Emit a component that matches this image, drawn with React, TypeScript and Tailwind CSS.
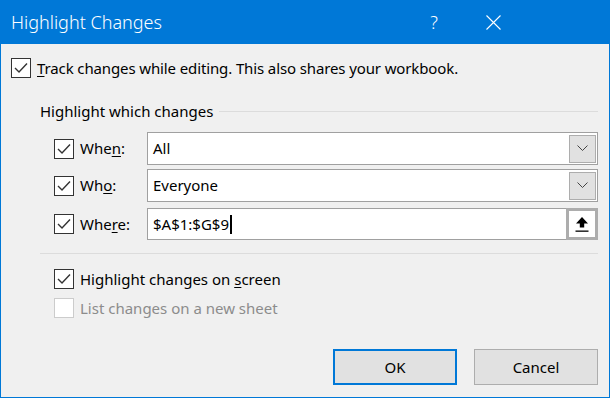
import React from "react";

const font = { fontFamily: '"Noto Sans", "Segoe UI", sans-serif' };

function Check({ checked = true, disabled = false }: { checked?: boolean; disabled?: boolean }) {
  return (
    <div
      className={`w-[20px] h-[20px] shrink-0 border flex items-center justify-center ${
        disabled ? "border-[#cccccc] bg-[#ffffff]" : "border-[#333333] bg-[#ffffff]"
      }`}
    >
      {checked && (
        <svg width="14" height="12" viewBox="0 0 14 12">
          <path d="M1 6 L5 10 L13 1.5" fill="none" stroke="#333" strokeWidth="1.4" />
        </svg>
      )}
    </div>
  );
}

function Chevron() {
  return (
    <svg width="11" height="7" viewBox="0 0 11 7">
      <path d="M0.5 0.5 L5.5 5.5 L10.5 0.5" fill="none" stroke="#444" strokeWidth="1" />
    </svg>
  );
}

function Combo({ text }: { text: string }) {
  return (
    <div className="flex-1 h-[33px] border border-[#a0a0a0] bg-white flex items-center">
      <span className="flex-1 pl-[5px] text-[15px] text-black">{text}</span>
      <div className="w-[27px] h-[28px] mr-[1px] bg-[#e1e1e1] border border-[#adadad] flex items-center justify-center">
        <Chevron />
      </div>
    </div>
  );
}

export default function App() {
  return (
    <div
      style={font}
      className="w-[610px] h-[398px] border border-[#0078d7] bg-[#f0f0f0] flex flex-col text-black"
    >
      <div className="h-[43px] bg-[#0078d7] flex items-center text-white shrink-0">
        <span className="ml-[10px] text-[18px] font-light flex-1">Highlight Changes</span>
        <span className="text-[18px] font-light w-[20px] text-center mr-[41px]">?</span>
        <div className="w-[16px] h-[16px] mr-[108px] flex items-center justify-center">
          <svg width="15" height="15" viewBox="0 0 15 15">
            <path d="M0.5 0.5 L14.5 14.5 M14.5 0.5 L0.5 14.5" stroke="white" strokeWidth="1.1" />
          </svg>
        </div>
      </div>

      <div className="flex-1 flex flex-col pl-[10px] pr-[11px]">
        <div className="flex items-center mt-[14px] h-[20px]">
          <Check />
          <span className="ml-[6px] text-[15px] whitespace-nowrap tracking-[-0.12px]">
            <span className="underline underline-offset-2">T</span>rack changes while editing. This also shares your workbook.
          </span>
        </div>

        <div className="flex items-center mt-[23px] ml-[29px] h-[20px]">
          <span className="text-[15px] whitespace-nowrap">Highlight which changes</span>
          <div className="flex-1 h-px bg-[#dcdcdc] ml-[6px]" />
        </div>

        <div className="flex flex-col ml-[43px] mt-[11px] gap-[4px]">
          <div className="flex items-center">
            <Check />
            <span className="ml-[6px] w-[67px] text-[15px]">
              Whe<span className="underline underline-offset-2">n</span>:
            </span>
            <Combo text="All" />
          </div>
          <div className="flex items-center">
            <Check />
            <span className="ml-[6px] w-[67px] text-[15px]">
              Wh<span className="underline underline-offset-2">o</span>:
            </span>
            <Combo text="Everyone" />
          </div>
          <div className="flex items-center mt-[2px]">
            <Check />
            <span className="ml-[6px] w-[67px] text-[15px]">
              Whe<span className="underline underline-offset-2">r</span>e:
            </span>
            <div className="flex-1 h-[32px] border border-[#a0a0a0] bg-white flex items-center">
              <span className="flex-1 pl-[5px] text-[15px] flex items-center">
                $A$1:$G$9
                <span className="inline-block w-[2px] h-[19px] bg-black ml-[1px]" />
              </span>
              <div className="w-[32px] h-[32px] -mr-px border-[3px] border-[#adadad] bg-white flex items-center justify-center">
                <svg width="14" height="17" viewBox="0 0 14 17">
                  <path d="M7 1 L13 7.5 L9.2 7.5 L9.2 11.5 L4.8 11.5 L4.8 7.5 L1 7.5 Z" fill="black" />
                  <rect x="0.5" y="14.5" width="13" height="1.3" fill="black" />
                </svg>
              </div>
            </div>
          </div>
        </div>

        <div className="h-px bg-[#dcdcdc] ml-[29px] mt-[13px]" />

        <div className="flex flex-col ml-[43px] mt-[15px] gap-[9px]">
          <div className="flex items-center h-[20px]">
            <Check />
            <span className="ml-[6px] text-[15px]">
              Highlight changes on <span className="underline underline-offset-2">s</span>creen
            </span>
          </div>
          <div className="flex items-center h-[20px]">
            <Check checked={false} disabled />
            <span className="ml-[6px] text-[15px] text-[#8c8c8c]">List changes on a new sheet</span>
          </div>
        </div>

        <div className="flex justify-end gap-[17px] mt-[31px]">
          <div className="w-[124px] h-[36px] border-2 border-[#0078d7] bg-[#e1e1e1] flex items-center justify-center text-[15px]">
            OK
          </div>
          <div className="w-[124px] h-[36px] border border-[#adadad] bg-[#e1e1e1] flex items-center justify-center text-[15px]">
            Cancel
          </div>
        </div>
      </div>
    </div>
  );
}
